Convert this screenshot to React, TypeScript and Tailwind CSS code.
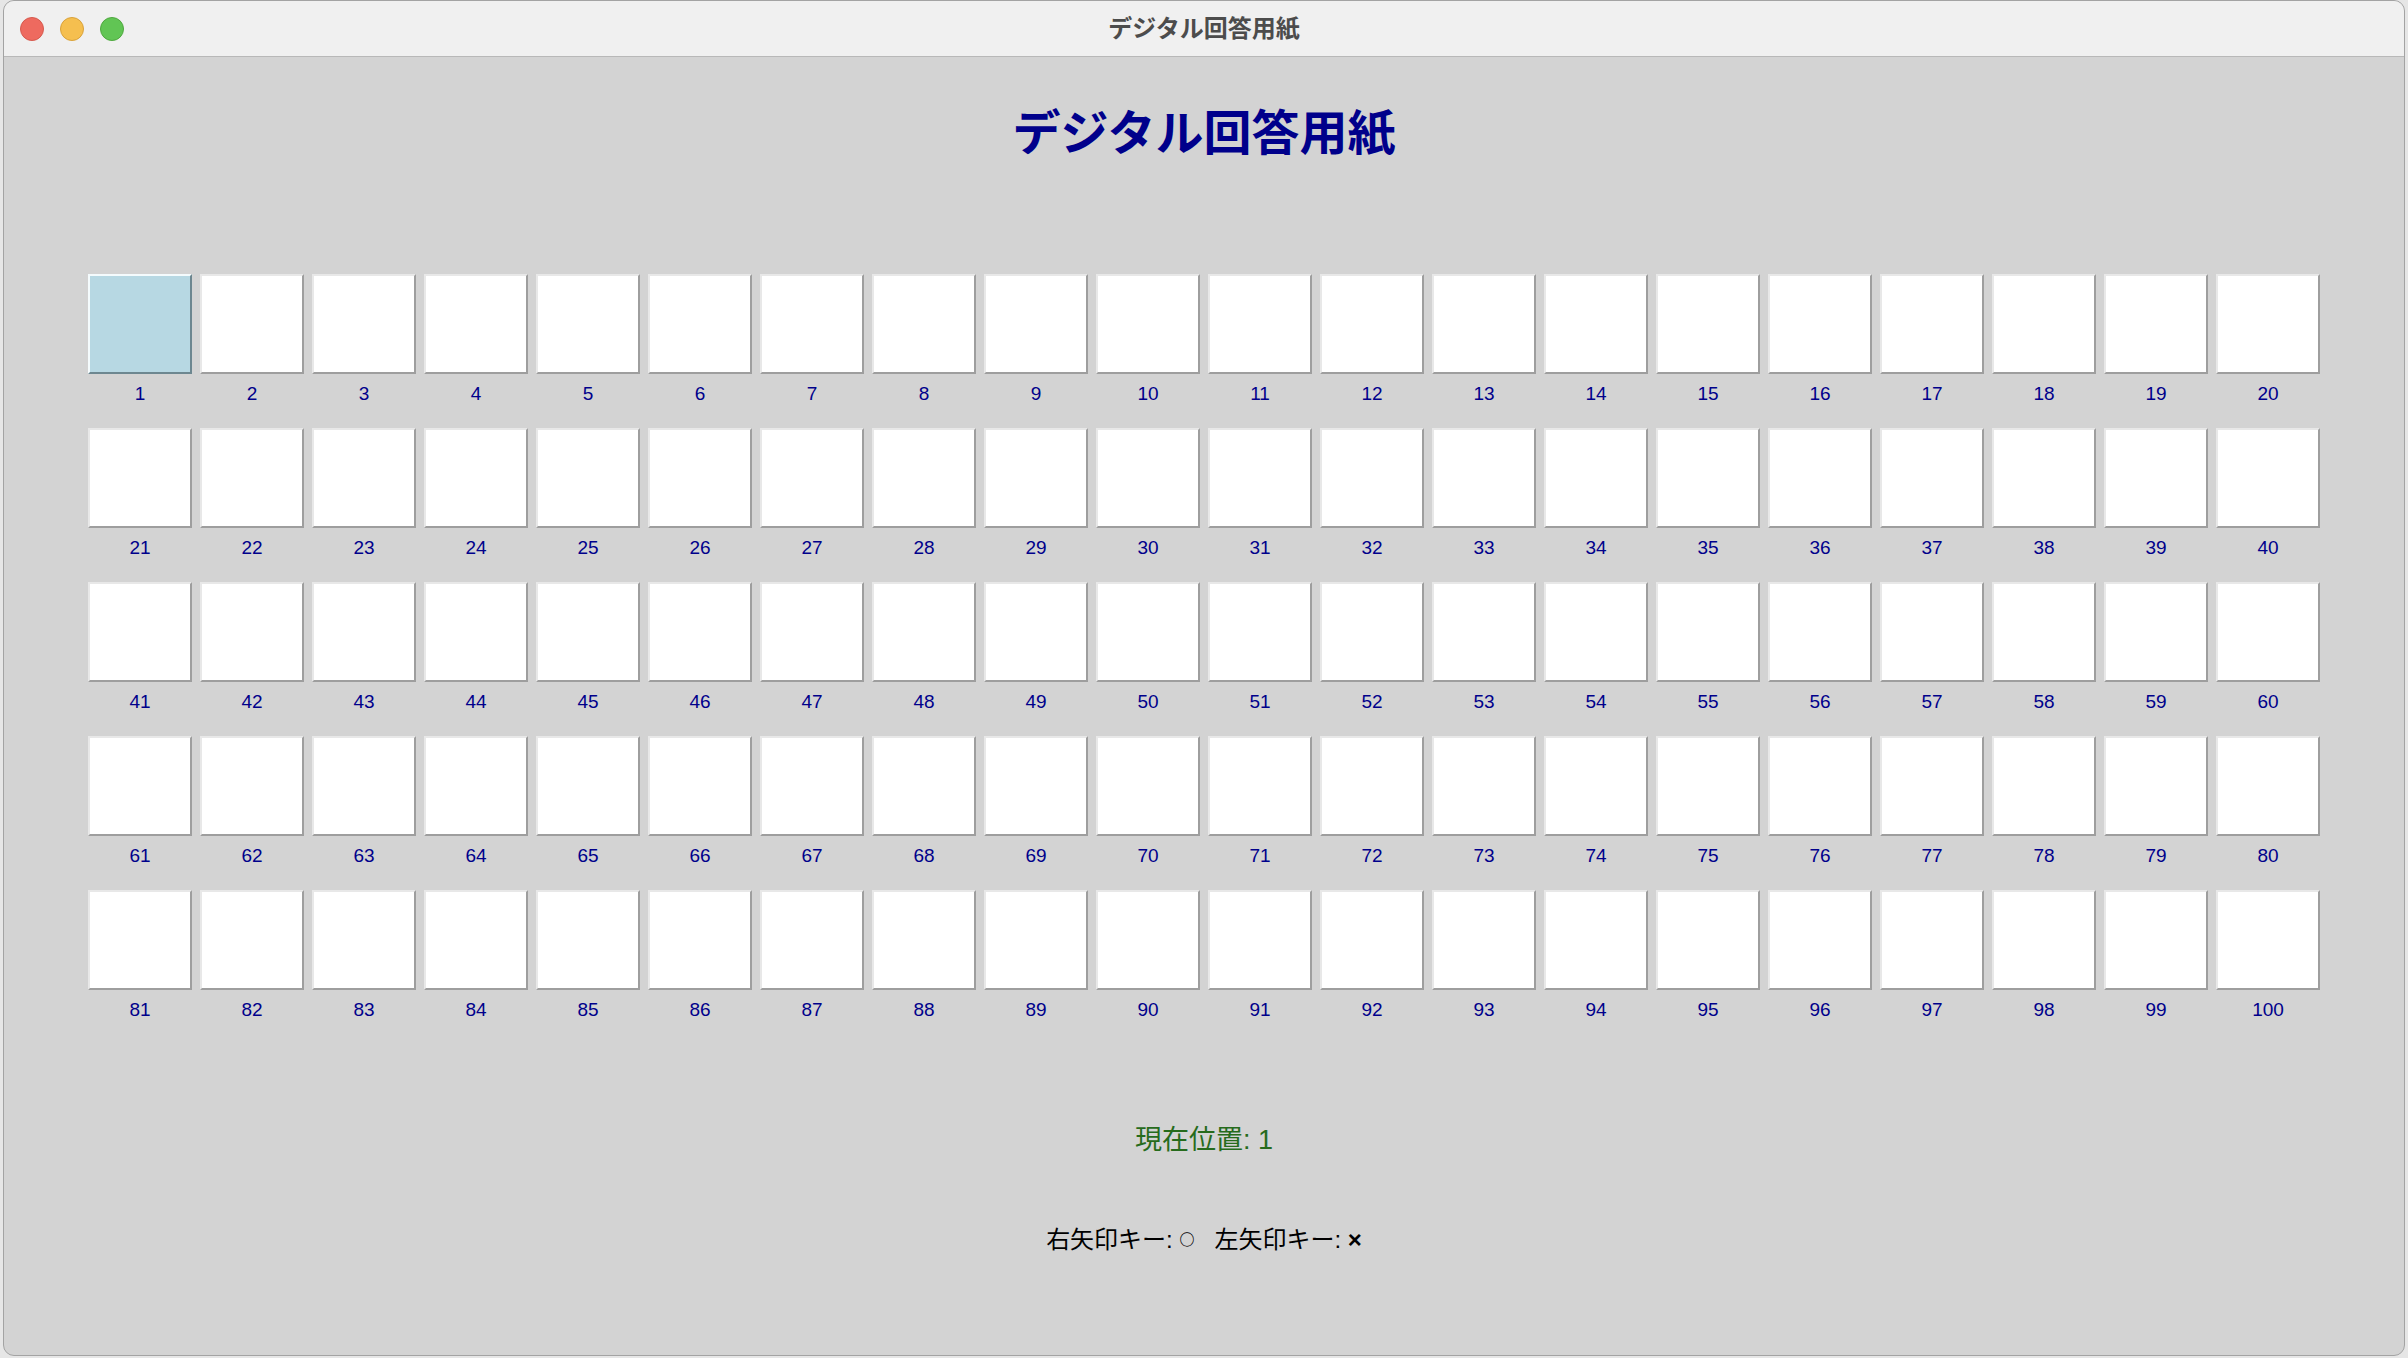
const cells = Array.from({ length: 100 }, (_, i) => i + 1);

function TrafficLights() {
  return (
    <div className="flex items-center gap-[16px] pl-[16px]">
      <span className="block h-[24px] w-[24px] rounded-full border border-[#d65a4e] bg-[#ee6a5f]" />
      <span className="block h-[24px] w-[24px] rounded-full border border-[#d9a23b] bg-[#f5bf4f]" />
      <span className="block h-[24px] w-[24px] rounded-full border border-[#4fa83f] bg-[#61c554]" />
    </div>
  );
}

export default function App() {
  const current = 1;

  return (
    <div className="h-[1358px] w-[2408px] bg-[#e6e6e6] font-['Liberation_Sans','Noto_Sans_CJK_JP',sans-serif]">
      <div className="ml-[3px] flex h-[1356px] w-[2402px] flex-col overflow-hidden rounded-[11px] border border-[#a3a3a3] bg-[#d3d3d3]">
        {/* title bar */}
        <div className="grid h-[56px] shrink-0 grid-cols-[1fr_auto_1fr] items-center border-b border-[#b8b8b8] bg-[#f0f0f0]">
          <TrafficLights />
          <div className="pb-[4px] font-['Noto_Sans_CJK_JP',sans-serif] text-[24px] font-bold leading-[32px] text-[#4c4c4c]">
            デジタル回答用紙
          </div>
          <div />
        </div>

        <main className="flex flex-col items-center">
          <h1 className="mt-[40px] font-['Noto_Sans_CJK_JP',sans-serif] text-[48px] font-bold leading-[64px] text-[#00008b]">
            デジタル回答用紙
          </h1>

          <div className="mt-[113px] grid grid-cols-[repeat(20,104px)] gap-x-[8px] gap-y-[23px]">
            {cells.map((n) => (
              <div key={n} className="flex flex-col items-center">
                <div
                  className={
                    n === current
                      ? "h-[100px] w-[104px] border-2 border-t-[#f4fbfd] border-l-[#f4fbfd] border-b-[#6d8790] border-r-[#6d8790] bg-[#b7d8e3]"
                      : "h-[100px] w-[104px] border-2 border-t-[#e8e8e8] border-l-[#e8e8e8] border-b-[#9e9e9e] border-r-[#9e9e9e] bg-white"
                  }
                />
                <span className="mt-[9px] text-[19px] leading-[22px] text-[#00008b]">{n}</span>
              </div>
            ))}
          </div>

          <p className="mt-[101px] text-[27px] leading-[36px] text-[#266b1c]">現在位置: {current}</p>

          <p className="mt-[65px] whitespace-pre text-[24px] leading-[32px] text-black">
            右矢印キー:{" "}
            <span className="align-[3px] font-['Noto_Sans_CJK_JP',sans-serif] text-[15px] font-bold">○</span>
            {"   "}左矢印キー: <span className="font-bold">×</span>
          </p>
        </main>
      </div>
    </div>
  );
}
